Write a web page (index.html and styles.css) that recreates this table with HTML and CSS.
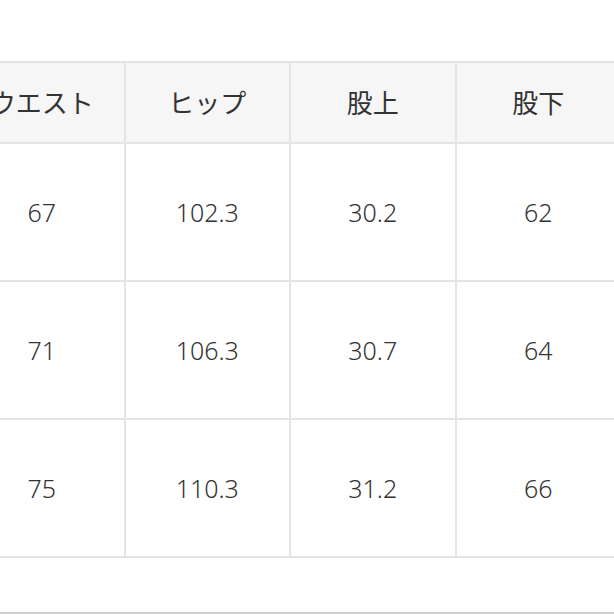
FILE: index.html
```html
<!DOCTYPE html>
<html lang="ja">
<head>
<meta charset="utf-8">
<link rel="stylesheet" href="styles.css">
</head>
<body>
<div class="page">
  <table class="size-table">
    <thead>
      <tr><th>ウエスト</th><th>ヒップ</th><th>股上</th><th>股下</th></tr>
    </thead>
    <tbody>
      <tr><td>67</td><td>102.3</td><td>30.2</td><td>62</td></tr>
      <tr><td>71</td><td>106.3</td><td>30.7</td><td>64</td></tr>
      <tr><td>75</td><td>110.3</td><td>31.2</td><td>66</td></tr>
    </tbody>
  </table>
  <div class="rule"></div>
</div>
</body>
</html>
```

FILE: styles.css
```css
html, body {
  margin: 0;
  padding: 0;
  background: #ffffff;
}
.page {
  width: 614px;
  height: 614px;
  overflow: hidden;
  padding-top: 61px;
  box-sizing: border-box;
  display: flex;
  flex-direction: column;
}
.size-table {
  border-collapse: collapse;
  table-layout: fixed;
  width: 662px;
  flex: none;
  margin-left: -42px;
  font-family: "Noto Sans", "Noto Sans CJK JP", sans-serif;
  font-size: 25px;
  color: #333333;
}
.size-table th,
.size-table td {
  width: 163.5px;
  border: 2px solid #e4e4e4;
  text-align: center;
  padding: 0;
  font-weight: 300;
}
.size-table th {
  height: 79px;
  background: #f6f6f6;
  font-size: 26px;
  font-weight: 400;
  padding-bottom: 0;
  line-height: 1;
}
.size-table td {
  height: 136px;
  background: #ffffff;
}
.rule {
  margin-top: auto;
  height: 2px;
  background: #cfcfcf;
}
```
